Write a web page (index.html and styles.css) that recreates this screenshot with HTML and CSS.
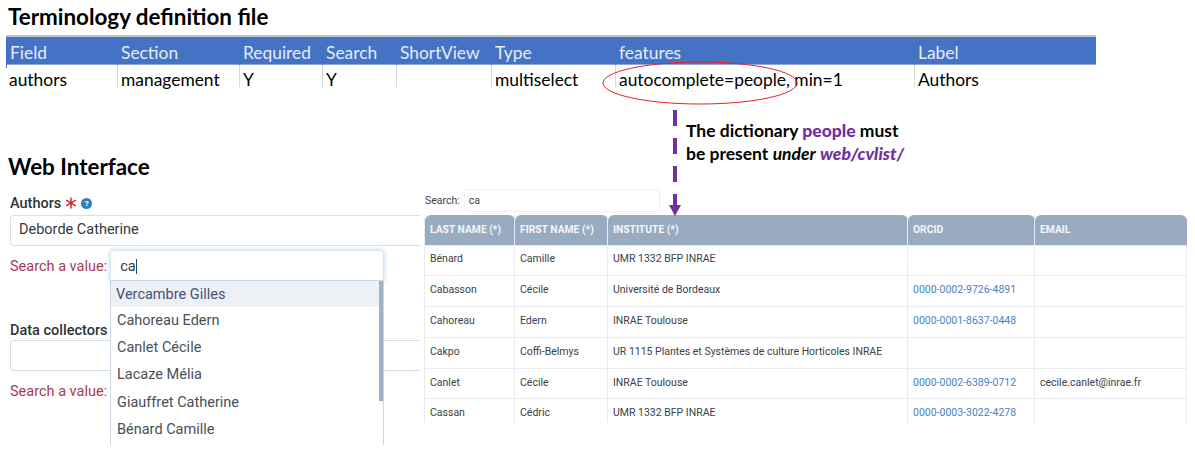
FILE: index.html
```html
<!DOCTYPE html>
<html lang="en">
<head>
  <meta charset="UTF-8" />
  <title>Terminology definition file</title>
  <link rel="stylesheet" href="styles.css">
</head>
<body>
  <div class="page">
    <h1 class="title">Terminology definition file</h1>

    <!-- spreadsheet extract -->
    <div class="sheet">
      <div class="sheet-row sheet-head">
        <span>Field</span><span>Section</span><span>Required</span><span>Search</span><span>ShortView</span><span>Type</span><span>features</span><span>Label</span>
      </div>
      <div class="sheet-row sheet-body">
        <span>authors</span><span>management</span><span>Y</span><span>Y</span><span></span><span>multiselect</span><span>autocomplete=people, min=1</span><span>Authors</span>
      </div>
    </div>

    <div class="lower">
      <div class="form-col">
        <h1 class="title">Web Interface</h1>

        <div class="field-label">
          Authors
          <svg class="star" viewBox="0 0 12 12"><path d="M6 0.5V11.5M1.2 3.2L10.8 8.8M10.8 3.2L1.2 8.8"/></svg>
          <span class="help">?</span>
        </div>
        <div class="text-box">Deborde Catherine</div>
        <div class="search-row">
          <span class="search-label">Search a value:</span>
          <div class="search-box">ca<i class="caret"></i></div>
        </div>

        <div class="field-label second">Data collectors</div>
        <div class="text-box"></div>
        <div class="search-row">
          <span class="search-label">Search a value:</span>
        </div>

        <ul class="dropdown">
          <li class="active">Vercambre Gilles</li>
          <li>Cahoreau Edern</li>
          <li>Canlet Cécile</li>
          <li>Lacaze Mélia</li>
          <li>Giauffret Catherine</li>
          <li>Bénard Camille</li>
        </ul>
      </div>

      <div class="table-col">
        <div class="table-search">
          <label>Search:</label>
          <div class="table-search-box">ca</div>
        </div>
        <div class="table-clip">
          <table class="people">
            <thead>
              <tr>
                <th class="c-last">Last name (*)</th>
                <th class="c-first">First name (*)</th>
                <th class="c-inst">Institute (*)</th>
                <th class="c-orcid">ORCID</th>
                <th class="c-email">Email</th>
              </tr>
            </thead>
            <tbody>
              <tr><td>Bénard</td><td>Camille</td><td>UMR 1332 BFP INRAE</td><td></td><td></td></tr>
              <tr><td>Cabasson</td><td>Cécile</td><td>Université de Bordeaux</td><td><a>0000-0002-9726-4891</a></td><td></td></tr>
              <tr><td>Cahoreau</td><td>Edern</td><td>INRAE Toulouse</td><td><a>0000-0001-8637-0448</a></td><td></td></tr>
              <tr><td>Cakpo</td><td>Coffi-Belmys</td><td>UR 1115 Plantes et Systèmes de culture Horticoles INRAE</td><td></td><td></td></tr>
              <tr><td>Canlet</td><td>Cécile</td><td>INRAE Toulouse</td><td><a>0000-0002-6389-0712</a></td><td>cecile.canlet@inrae.fr</td></tr>
              <tr><td>Cassan</td><td>Cédric</td><td>UMR 1332 BFP INRAE</td><td><a>0000-0003-3022-4278</a></td><td></td></tr>
            </tbody>
          </table>
        </div>
      </div>
    </div>

    <!-- annotations on top of the screenshots -->
    <svg class="marks" viewBox="0 0 1195 465">
      <ellipse cx="700" cy="83" rx="97" ry="21" class="ring"/>
      <path d="M675 110V205" class="dash"/>
      <path d="M669 205H681L675 216Z" class="head"/>
    </svg>
    <p class="note">The dictionary <b>people</b> must<br>be present <em>under</em> <b><em>web/cvlist/</em></b></p>
  </div>
</body>
</html>
```

FILE: styles.css
```css
* {
  box-sizing: border-box;
}

body {
  margin: 0;
  background: white;
}

.page {
  position: relative;
  width: 1195px;
  height: 465px;
  overflow: hidden;
  padding-top: 4px;
  color: #000;
}

.title {
  margin: 0 0 0 8px;
  font-family: "Lato", sans-serif;
  font-size: 22.4px;
  font-weight: 700;
  line-height: 26px;
  color: #000;
}

/* spreadsheet */
.sheet {
  margin: 5px 0 0 6px;
  width: 1090px;
  font-family: "Lato", sans-serif;
  font-size: 17.4px;
}

.sheet-row {
  display: grid;
  grid-template-columns: 111px 122px 83px 74px 95px 124px 299px 182px;
}

.sheet-row span {
  padding-left: 3px;
  border-left: 1px solid #d8d8d8;
}

.sheet-head {
  height: 30px;
  line-height: 31px;
  background: #4472c4;
  border-top: 2px solid #c4c4c4;
  border-bottom: 1px solid #8eaadb;
  color: #e4ecf8;
}

.sheet-head span {
  border-left-color: #4472c4;
}

.sheet-body {
  height: 22px;
}

.sheet-body span {
  height: 22px;
  line-height: 30px;
}

.sheet-body span:nth-child(1) {
  border-left: none;
}

/* lower part */
.lower {
  display: grid;
  grid-template-columns: 420px 770px;
  margin-top: 67px;
}

.form-col {
  position: relative;
  height: 310px;
  font-family: "Roboto", sans-serif;
  font-size: 14.5px;
  color: #343a40;
}

.field-label {
  display: flex;
  align-items: center;
  gap: 3px;
  margin: 14px 0 0 10px;
  height: 18px;
  font-weight: 500;
  color: #2f3337;
}

.field-label.second {
  margin-top: 40px;
  margin-bottom: -2px;
}

.star {
  width: 12px;
  height: 12px;
  margin-left: 1px;
}

.star path {
  fill: none;
  stroke: #e0202e;
  stroke-width: 1.5;
}

.help {
  width: 11px;
  height: 11px;
  margin-left: 1px;
  border-radius: 50%;
  background: #2f7fb8;
  color: white;
  font-size: 8px;
  font-weight: 700;
  line-height: 11px;
  text-align: center;
}

.text-box {
  height: 31px;
  margin: 3px 0 0 10px;
  padding-left: 8px;
  line-height: 28px;
  border: 1px solid #d5dfea;
  border-right: none;
  border-radius: 4px 0 0 4px;
  background: white;
}

.search-row {
  display: flex;
  align-items: center;
  gap: 4px;
  height: 30px;
  margin: 5px 0 0 10px;
}

.search-label {
  color: #a93a55;
}

.search-box {
  display: flex;
  align-items: center;
  width: 272px;
  height: 30px;
  padding-left: 9px;
  background: white;
  border-radius: 3px;
  box-shadow: 0 0 5px 1px #b9d3ec;
}

.caret {
  width: 1px;
  height: 15px;
  background: #24466e;
}

.dropdown {
  position: absolute;
  left: 110px;
  top: 126px;
  width: 274px;
  height: 165px;
  margin: 0;
  padding: 0;
  overflow: hidden;
  list-style: none;
  background: white;
  border-left: 1px solid #c9d6e4;
  border-right: 1px solid #c9d6e4;
  border-top: 1px solid #c9d6e4;
  color: #495057;
}

.dropdown::after {
  content: "";
  position: absolute;
  right: 0;
  top: 0;
  width: 4px;
  height: 120px;
  background: #9eb1c6;
}

.dropdown li {
  height: 27.2px;
  padding-left: 6px;
  line-height: 28px;
}

.dropdown li.active {
  height: 26px;
  padding-left: 5px;
  line-height: 27px;
  margin-right: 4px;
  background: #edf0f5;
  color: #46527a;
}

/* people table */
.table-col {
  padding: 35px 0 0 5px;
  font-family: "Roboto", sans-serif;
  font-size: 10.5px;
  color: #3c4146;
}

.table-search {
  display: flex;
  align-items: center;
  gap: 4px;
}

.table-search-box {
  width: 196px;
  height: 23px;
  padding-left: 4px;
  line-height: 22px;
  border: 1px solid #f0f0f0;
  border-radius: 3px;
}

.table-clip {
  height: 207px;
  margin: 3px 0 0 -1px;
  overflow: hidden;
}

.people {
  table-layout: fixed;
  width: 762px;
  border-collapse: collapse;
}

.c-last { width: 90px; }
.c-first { width: 93px; }
.c-inst { width: 300px; }
.c-orcid { width: 127px; }
.c-email { width: 152px; }

.people th {
  height: 30px;
  padding: 0 5px;
  text-align: left;
  text-transform: uppercase;
  font-size: 10.3px;
  font-weight: 700;
  color: #f4f6f8;
  background: #98abc0;
  border-left: 1px solid #e8ecf1;
  border-radius: 6px 6px 0 0;
}

.people td {
  height: 30.8px;
  padding: 0 5px 3px;
  border: 1px solid #e9ebef;
  white-space: nowrap;
}

.people a {
  color: #4a7fc4;
}

/* annotations */
.marks {
  position: absolute;
  left: 0;
  top: 0;
  width: 1195px;
  height: 465px;
  pointer-events: none;
}

.ring {
  fill: none;
  stroke: #e8212b;
  stroke-width: 1;
}

.dash {
  fill: none;
  stroke: #7030a0;
  stroke-width: 4;
  stroke-dasharray: 16 12;
}

.head {
  fill: #7030a0;
}

.note {
  position: absolute;
  left: 686px;
  top: 119px;
  margin: 0;
  font-family: "Lato", sans-serif;
  font-size: 17.5px;
  font-weight: 700;
  line-height: 23px;
}

.note b {
  color: #7030a0;
}
```
